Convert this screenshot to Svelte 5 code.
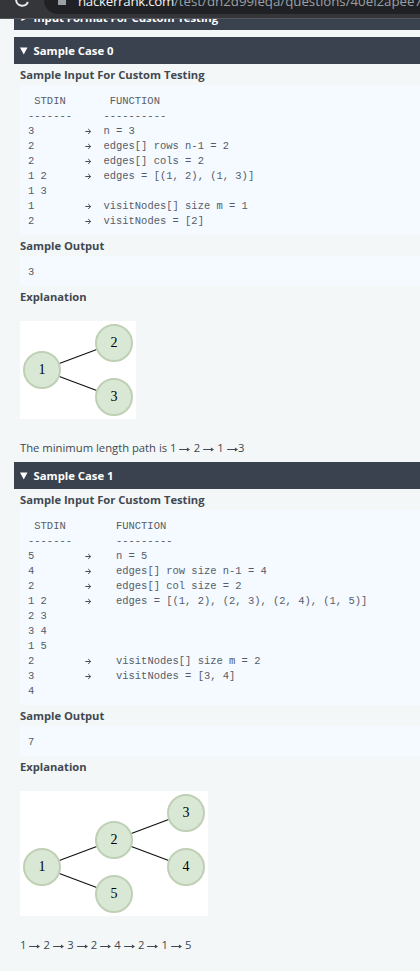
<script>
  const cases = [
    {
      title: 'Sample Case 0',
      input: [
        ' STDIN       FUNCTION',
        '-------     ----------',
        '3        →  n = 3',
        '2        →  edges[] rows n-1 = 2',
        '2        →  edges[] cols = 2',
        '1 2      →  edges = [(1, 2), (1, 3)]',
        '1 3',
        '1        →  visitNodes[] size m = 1',
        '2        →  visitNodes = [2]'
      ],
      output: '3',
      width: 116,
      height: 98,
      nodes: [[22, 49, 1], [94, 22, 2], [94, 76, 3]],
      edges: [[0, 1], [0, 2]],
      path: 'The minimum length path is 1 → 2 → 1 →3'
    },
    {
      title: 'Sample Case 1',
      input: [
        ' STDIN        FUNCTION',
        '-------       ---------',
        '5        →    n = 5',
        '4        →    edges[] row size n-1 = 4',
        '2        →    edges[] col size = 2',
        '1 2      →    edges = [(1, 2), (2, 3), (2, 4), (1, 5)]',
        '2 3',
        '3 4',
        '1 5',
        '2        →    visitNodes[] size m = 2',
        '3        →    visitNodes = [3, 4]',
        '4'
      ],
      output: '7',
      width: 188,
      height: 125,
      nodes: [[22, 76, 1], [94, 49, 2], [166, 22, 3], [166, 76, 4], [94, 103, 5]],
      edges: [[0, 1], [0, 4], [1, 2], [1, 3]],
      path: '1 → 2 → 3 → 2 → 4 → 2 → 1 → 5'
    }
  ];
</script>

{#snippet words(text)}
  {#each text.split('→') as part, i}{#if i}<svg class="arrow" viewBox="0 0 11 8"><path d="M0 4.5H10" /><path class="head" d="M7.8 2.5L10.8 4.5L7.8 6.5Z" /></svg>{/if}{part}{/each}
{/snippet}

{#snippet code(text)}
  {#each text.split('→') as part, i}{#if i}<svg class="code-arrow" viewBox="0 0 6.3 8"><path d="M.3 4.5H5.6M3.2 2L5.7 4.5L3.2 7" /></svg>{/if}{part}{/each}
{/snippet}

<div class="screen">
  <div class="browser">
    <svg class="reload" width="18" height="8" viewBox="0 0 18 8"><path d="M2.2 -1A6.1 6.1 0 0 0 13.9 2" /><path class="tip" d="M9 0H15V-4Z" /></svg>
    <div class="address">
      <span class="lock"></span>
      <span class="url"><b>hackerrank.com</b>/test/dh2d99leqa/questions/40ei2apee7</span>
    </div>
  </div>
  <div class="content">
    <div class="bar cut"><span class="mark">►</span><span class="cut-title">Input Format For Custom Testing</span></div>
    {#each cases as c}
      <section>
        <div class="bar">
          <svg class="mark" width="8" height="8" viewBox="0 0 8 8"><path d="M0 .5H7.5L3.75 7.5Z" fill="#fff" /></svg>
          <span>{c.title}</span>
        </div>
        <div class="body">
          <h4>Sample Input For Custom Testing</h4>
          <div class="pre">{#each c.input as line}<div class="line">{@render code(line)}</div>{/each}</div>
          <h4>Sample Output</h4>
          <div class="pre"><div class="line">{c.output}</div></div>
          <h4>Explanation</h4>
          <svg class="graph" width={c.width} height={c.height}>
            {#each c.edges as [a, b]}
              <line x1={c.nodes[a][0]} y1={c.nodes[a][1]} x2={c.nodes[b][0]} y2={c.nodes[b][1]} />
            {/each}
            {#each c.nodes as [x, y, label]}
              <circle cx={x} cy={y} r="18" />
              <text {x} y={y + 4}>{label}</text>
            {/each}
          </svg>
          <p>{@render words(c.path)}</p>
        </div>
      </section>
    {/each}
  </div>
</div>

<style>
  .screen {
    width: 420px;
    height: 971px;
    overflow: hidden;
    background: #f3f7f7;
    font-family: 'Open Sans', 'Noto Sans', sans-serif;
    color: #424851;
  }
  .browser {
    display: flex;
    height: 19px;
    background: #35363a;
    border-bottom: 1px solid #55585d;
    box-sizing: border-box;
  }
  .reload {
    margin-left: 14px;
    flex: none;
    fill: none;
    stroke: #e8eaed;
    stroke-width: 2;
  }
  .reload .tip { fill: #e8eaed; stroke: none; }
  .address {
    display: flex;
    margin-left: 12px;
    width: 376px;
    height: 14px;
    flex: none;
    background: #202124;
    border-radius: 0 0 0 14px;
    overflow: hidden;
  }
  .lock {
    width: 8px;
    height: 5px;
    margin-left: 14px;
    flex: none;
    background: #9aa0a6;
  }
  .url {
    margin: -8px 0 0 12px;
    font-size: 13.3px;
    line-height: 18px;
    letter-spacing: -.02px;
    color: #9aa0a6;
    white-space: nowrap;
  }
  .url b { font-weight: 400; color: #f1f3f4; letter-spacing: -.28px; }
  .content { padding-left: 14px; }
  .bar {
    display: flex;
    align-items: center;
    height: 27px;
    padding-left: 6px;
    background: #3a424f;
    color: #fff;
    font-size: 11.3px;
    font-weight: 700;
    line-height: 27px;
  }
  .bar .mark { width: 8px; margin-right: 5.5px; font-size: 7px; flex: none; }
  .bar.cut {
    height: 11px;
    margin-bottom: 7px;
    align-items: flex-start;
    overflow: hidden;
    line-height: 12px;
  }
  .cut .mark { margin-top: -6px; }
  .cut-title { margin-top: -7px; letter-spacing: -.05px; }
  .body { padding-left: 6px; }
  h4 {
    margin: 0;
    height: 21px;
    font-size: 11.2px;
    font-weight: 700;
    line-height: 22px;
    white-space: nowrap;
  }
  .pre {
    padding: 9px 0 6px 8px;
    background: #f4faff;
    font: 10.47px/15px 'Liberation Mono', monospace;
    color: #575c68;
  }
  .line { height: 15px; white-space: pre; }
  .graph { display: block; margin-top: 14px; background: #fff; }
  .graph line { stroke: #111; stroke-width: 1.2; }
  .graph circle { fill: #d8e8d5; stroke: #bfd0b5; stroke-width: 2; }
  .graph text { font: 14px 'Liberation Serif', serif; text-anchor: middle; fill: #000; }
  p {
    margin: 17px 0 0;
    height: 26px;
    font-size: 11.25px;
    line-height: 23px;
    white-space: nowrap;
  }
  .arrow { width: 11.3px; height: 8px; vertical-align: -1px; }
  .code-arrow { width: 6.3px; height: 8px; vertical-align: -1px; }
  .arrow path, .code-arrow path { fill: none; stroke: #424851; stroke-width: 1; }
  .arrow .head { fill: #424851; stroke: none; }
</style>
